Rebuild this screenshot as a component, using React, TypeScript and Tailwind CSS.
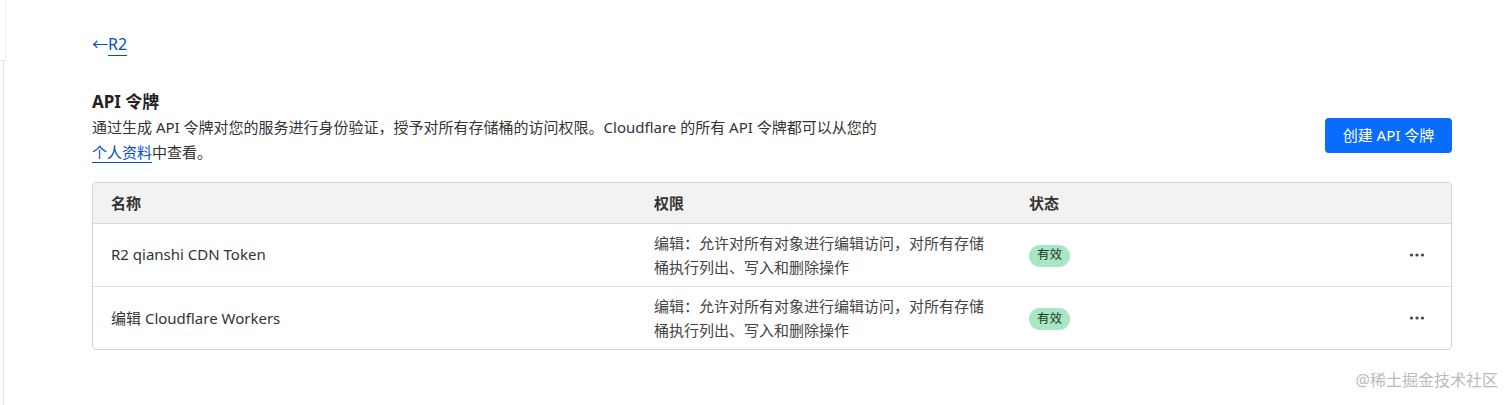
const TOKENS = [
  { id: 1, name: 'R2 qianshi CDN Token' },
  { id: 2, name: '编辑 Cloudflare Workers' },
]

const PERMISSION_TEXT = '编辑：允许对所有对象进行编辑访问，对所有存储桶执行列出、写入和删除操作'

function DotsIcon() {
  return (
    <svg className="w-[16px] h-[4px]" viewBox="0 0 16 4" fill="#444">
      <circle cx="2.5" cy="2" r="1.6" />
      <circle cx="8" cy="2" r="1.6" />
      <circle cx="13.5" cy="2" r="1.6" />
    </svg>
  )
}

export default function App() {
  return (
    <div
      className="flex h-[405px] w-[1512px] bg-white text-[#333] overflow-hidden relative"
      style={{ fontFamily: '"Noto Sans", "Noto Sans CJK SC", sans-serif' }}
    >
      {/* sidebar edge */}
      <div className="w-[4px] flex flex-col shrink-0">
        <div className="h-[61px] border-r border-r-[#f0f0f0] border-b border-b-[#e4e4e4] w-[6px]" />
        <div className="flex-1 border-r border-[#e4e4e4]" />
      </div>

      <div className="flex-1 pl-[88px] pr-[60px] pt-[32px]">
        <a className="inline-flex items-center text-[16px] leading-[22px] text-[#0051c3]">
          <span>←</span>
          <span className="underline underline-offset-[5px] decoration-[#0051c3]">R2</span>
        </a>

        <div className="mt-[34px] flex justify-between">
          <div>
            <h2 className="text-[17px] leading-[24px] font-bold text-[#222]">API 令牌</h2>
            <p className="mt-[1px] text-[15px] leading-[25px] text-[#333]">
              通过生成 API 令牌对您的服务进行身份验证，授予对所有存储桶的访问权限。Cloudflare 的所有 API 令牌都可以从您的
              <br />
              <a className="text-[#0051c3] underline underline-offset-[4px]">个人资料</a>中查看。
            </p>
          </div>
          <button className="mt-[28px] h-[35px] w-[127px] rounded-[4px] bg-[#0a6cff] text-white text-[15px] self-start">
            创建 API 令牌
          </button>
        </div>

        {/* Table */}
        <div className="mt-[17px] border border-[#d5d5d5] rounded-[4px] overflow-hidden">
          <table className="w-full table-fixed text-[15px]">
            <thead>
              <tr className="bg-[#f2f2f2] border-b border-[#dcdcdc]">
                <th className="w-[543px] text-left font-bold px-[18px] h-[40px]">名称</th>
                <th className="w-[375px] text-left font-bold px-[18px]">权限</th>
                <th className="w-[290px] text-left font-bold px-[18px]">状态</th>
                <th />
              </tr>
            </thead>
            <tbody>
              {TOKENS.map((t, i) => (
                <tr key={t.id} className={i > 0 ? 'border-t border-[#e0e0e0]' : ''}>
                  <td className="px-[18px] h-[63px] text-[#333]">{t.name}</td>
                  <td className="px-[18px] leading-[24px] text-[15px] text-[#444]">{PERMISSION_TEXT}</td>
                  <td className="px-[18px]">
                    <span className="inline-flex items-center h-[22px] px-[8px] rounded-full bg-[#a9e6c3] text-[12.5px] text-[#1f3a2a]">
                      有效
                    </span>
                  </td>
                  <td className="pr-[26px]">
                    <div className="flex justify-end">
                      <DotsIcon />
                    </div>
                  </td>
                </tr>
              ))}
            </tbody>
          </table>
        </div>
      </div>

      <div className="absolute right-[14px] bottom-[13px] text-[16px] text-[#bbb]">@稀土掘金技术社区</div>
    </div>
  )
}
